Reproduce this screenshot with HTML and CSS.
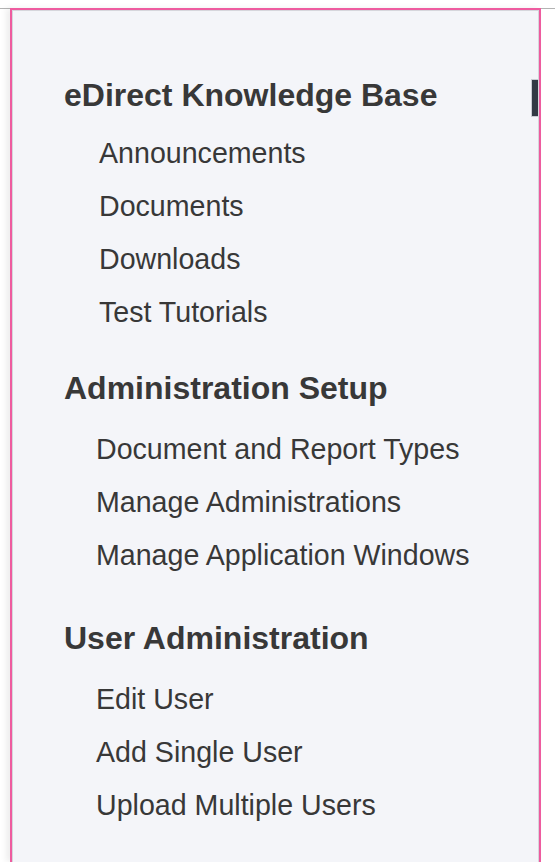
FILE: index.html
```html
<!DOCTYPE html>
<html lang="en">
<head>
<meta charset="utf-8">
<title>Sidebar</title>
<link rel="stylesheet" href="styles.css">
</head>
<body>
<div class="page">
  <nav class="panel">
    <span class="scroll-tab"></span>
    <section class="section section--first">
      <h2 class="section-title">eDirect Knowledge Base</h2>
      <ul class="links links--wide">
        <li>Announcements</li>
        <li>Documents</li>
        <li>Downloads</li>
        <li>Test Tutorials</li>
      </ul>
    </section>
    <section class="section section--second">
      <h2 class="section-title">Administration Setup</h2>
      <ul class="links">
        <li>Document and Report Types</li>
        <li>Manage Administrations</li>
        <li>Manage Application Windows</li>
      </ul>
    </section>
    <section class="section section--third">
      <h2 class="section-title">User Administration</h2>
      <ul class="links">
        <li>Edit User</li>
        <li>Add Single User</li>
        <li>Upload Multiple Users</li>
      </ul>
    </section>
  </nav>
</div>
</body>
</html>
```
FILE: styles.css
```css
html, body {
  margin: 0;
  padding: 0;
  background: #ffffff;
  height: 100%;
  overflow: hidden;
}

body {
  font-family: "Liberation Sans", Arial, Helvetica, sans-serif;
  color: #383838;
}

.page {
  padding-top: 8px;
}

.page::before {
  content: "";
  display: block;
  border-top: 1px solid #b3b3b3;
}

.panel {
  position: relative;
  margin: -1px 0 0 10px;
  width: 531px;
  height: calc(100vh - 8px);
  background: #f4f5f9;
  border: 2px solid #ee5b9f;
  border-bottom: none;
  box-shadow: inset 1px 1px 0 #d6d6dc, inset -1px 0 0 #d6d6dc, -4px 0 6px rgba(0, 0, 0, 0.07);
  padding: 65px 0 0 52px;
  box-sizing: border-box;
}

.scroll-tab {
  position: absolute;
  top: 69px;
  right: 1px;
  width: 6px;
  height: 36px;
  background: #323a45;
  border: 1px solid #c9ccd3;
  border-right: none;
}

.section-title {
  margin: 0;
  font-size: 32px;
  font-weight: bold;
  line-height: 40px;
  color: #383838;
}

.links {
  list-style: none;
  margin: 14.5px 0 0 0;
  padding: 0 0 0 32px;
  font-size: 28.6px;
  line-height: 53px;
}

.links--wide {
  margin-top: 11.5px;
  padding-left: 35px;
}

.section--second {
  margin-top: 29.5px;
}

.section--third {
  margin-top: 36.5px;
}
```
